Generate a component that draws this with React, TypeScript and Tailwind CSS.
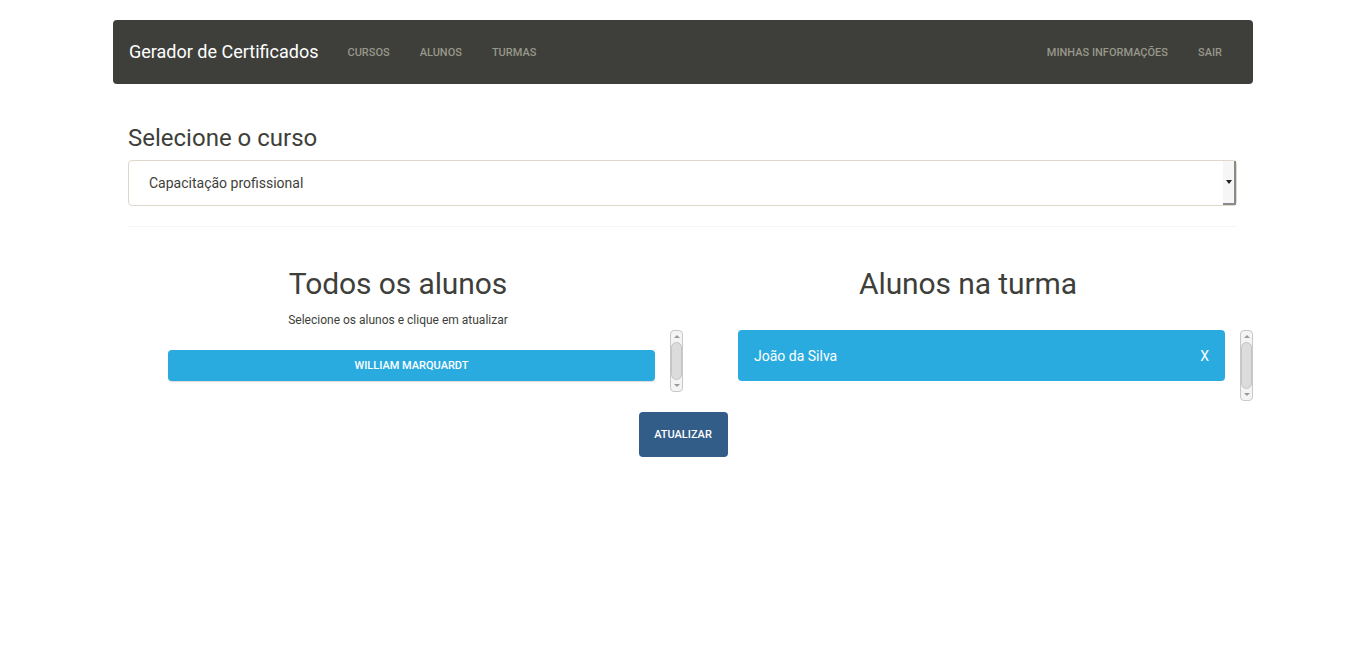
import React from "react";

function Scrollbar({ height }: { height: number }) {
  return (
    <div
      className="flex w-[13px] shrink-0 flex-col items-center rounded-[4px] border border-[#c8c8c8] bg-[#f4f4f4]"
      style={{ height }}
    >
      <div className="flex h-[11px] w-full items-center justify-center">
        <div className="h-0 w-0 border-x-[3px] border-b-[3px] border-x-transparent border-b-[#9a9a9a]" />
      </div>
      <div className="w-[11px] flex-1 rounded-[6px] border border-[#c4c4c4] bg-[#dcdcdc]" />
      <div className="flex h-[11px] w-full items-center justify-center">
        <div className="h-0 w-0 border-x-[3px] border-t-[3px] border-x-transparent border-t-[#9a9a9a]" />
      </div>
    </div>
  );
}

export default function App() {
  return (
    <div className="min-h-[671px] bg-white font-['Roboto',sans-serif] text-[#3e3f3a]">
      <div className="mx-auto w-[1140px] pt-5">
        <nav className="flex h-16 items-center rounded-[4px] bg-[#3e3f3a] pl-4 pr-[31px]">
          <span className="text-[18px] leading-none text-white">Gerador de Certificados</span>
          <ul className="ml-[29px] flex gap-[30px] pt-[2px] text-[11px] font-medium uppercase text-[#98978b]">
            <li>Cursos</li>
            <li>Alunos</li>
            <li>Turmas</li>
          </ul>
          <ul className="ml-auto flex gap-[30px] pt-[2px] text-[11px] font-medium uppercase text-[#98978b]">
            <li>Minhas informações</li>
            <li>Sair</li>
          </ul>
        </nav>

        <div className="px-[15px]">
          <h3 className="mt-[41px] text-[24px] leading-[26px]">Selecione o curso</h3>
          <div className="mt-[9px] flex h-[46px] w-[1109px] items-center rounded-[4px] border border-[#dfd7ca] pl-[20px]">
            <span className="text-[14px]">Capacitação profissional</span>
            <div className="ml-auto flex h-[44px] w-[13px] items-center justify-center border-b-2 border-r-2 border-[#8a8a8a] bg-[#f6f6f6]">
              <div className="h-0 w-0 border-x-[3px] border-t-[4px] border-x-transparent border-t-[#222]" />
            </div>
          </div>
          <div className="mt-[20px] h-px w-[1109px] bg-[#f8f5f0]" />

          <div className="flex">
            <div className="flex w-[540px] flex-col">
              <h2 className="mt-[40px] text-center text-[30px] leading-[33px] tracking-[-0.1px]">Todos os alunos</h2>
              <p className="mt-[10px] text-center text-[12px] leading-[20px]">
                Selecione os alunos e clique em atualizar
              </p>
              <div className="ml-[40px] flex w-[515px] shrink-0">
                <div className="w-[502px] pt-[20px]">
                  <div className="flex h-[31px] w-[487px] items-center justify-center rounded-[4px] bg-[#29abe0] pt-px text-[11px] font-medium uppercase text-white shadow-[0_1px_1px_rgba(0,0,0,0.15)]">
                    William Marquardt
                  </div>
                </div>
                <Scrollbar height={62} />
              </div>
            </div>

            <div className="ml-[30px] flex w-[540px] flex-col">
              <h2 className="mt-[40px] text-center text-[30px] leading-[33px] tracking-[-0.1px]">Alunos na turma</h2>
              <div className="ml-[40px] mt-[30px] flex w-[515px] shrink-0">
                <div className="w-[502px]">
                  <div className="flex h-[51px] w-[487px] items-center justify-between rounded-[4px] bg-[#29abe0] pl-[16px] pr-[16px] pt-px text-[14px] text-white">
                    <span>João da Silva</span>
                    <span>X</span>
                  </div>
                </div>
                <Scrollbar height={71} />
              </div>
            </div>
          </div>

          <div className="mt-[11px] flex justify-center">
            <div className="flex h-[45px] w-[89px] items-center justify-center rounded-[4px] bg-[#325d88] pt-px text-[11px] font-medium uppercase text-white">
              Atualizar
            </div>
          </div>
        </div>
      </div>
    </div>
  );
}
